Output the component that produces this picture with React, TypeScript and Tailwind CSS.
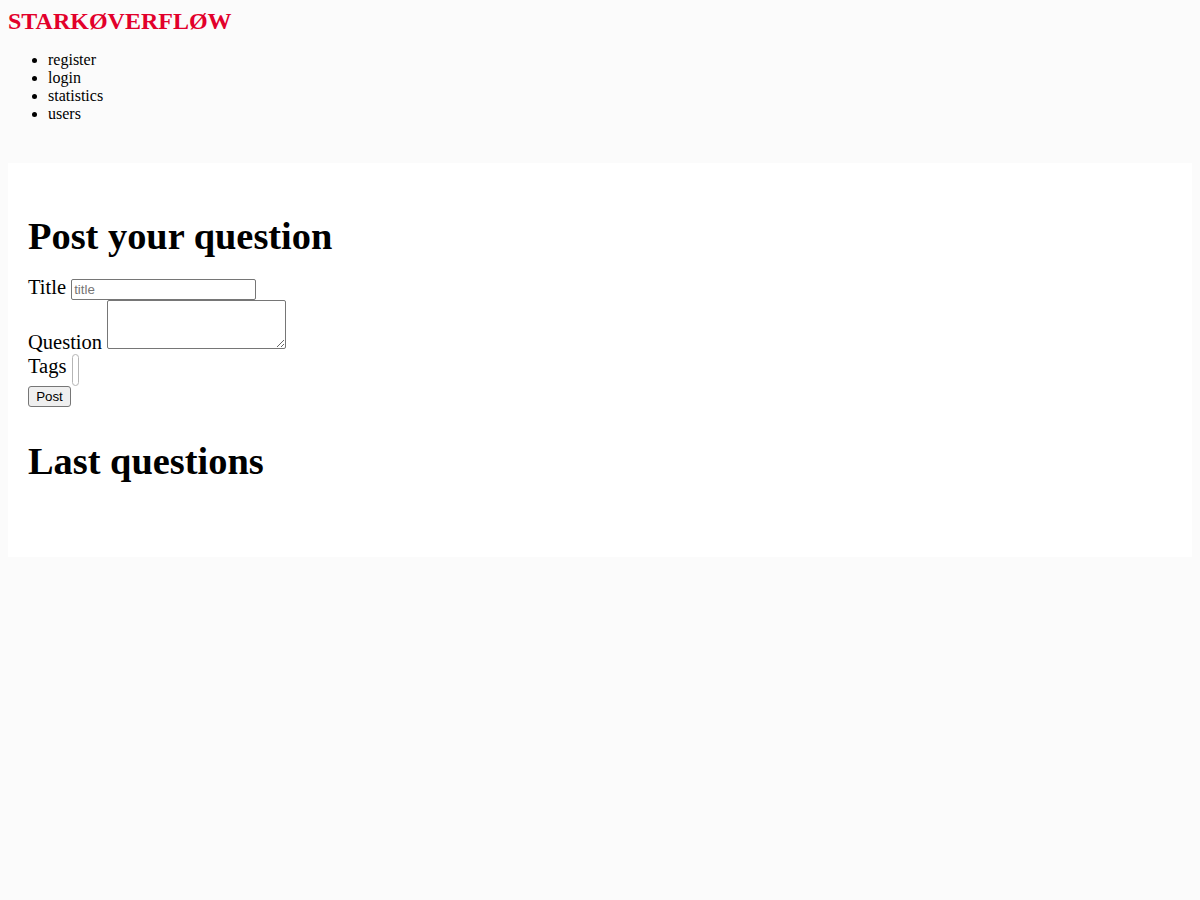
import { useState } from 'react';

const navLinks = ['register', 'login', 'statistics', 'users'];

const Header = () => (
  <header>
    <div className="text-[24px] font-bold leading-[27px] text-[#e2002b]">STARKØVERFLØW</div>
    <ul className="list-disc pl-10 my-4 text-[16px] leading-[18px]">
      {navLinks.map((link) => (
        <li key={link}>{link}</li>
      ))}
    </ul>
  </header>
);

const AskForm = () => {
  const [title, setTitle] = useState('');
  const [question, setQuestion] = useState('');

  return (
    <form className="text-[20.5px] leading-[23px]" onSubmit={(e) => e.preventDefault()}>
      <div>
        <label>Title</label>{' '}
        <input
          value={title}
          onChange={(e) => setTitle(e.target.value)}
          placeholder="title"
          className="w-[185px] h-[21px] border border-[#767676] rounded-[2px] px-[2px] py-[1px] bg-white font-['Liberation_Sans',Arial,sans-serif] text-[13.33px] leading-[normal] placeholder:text-[#757575] align-baseline"
        />
      </div>
      <div>
        <label>Question</label>{' '}
        <textarea
          value={question}
          onChange={(e) => setQuestion(e.target.value)}
          className="inline-block w-[179px] h-[49px] border border-[#767676] rounded-[2px] p-[2px] bg-white font-['Liberation_Mono',monospace] text-[13.33px] align-baseline"
        />
      </div>
      <div className="h-[32px]">
        <label className="relative top-[1px]">Tags</label>{' '}
        <span className="inline-block w-[7px] h-[32px] border border-[#b5b5b5] rounded-[4px] bg-white align-[-14px]" />
      </div>
      <button
        type="submit"
        className="block w-[43px] h-[21px] border border-[#767676] rounded-[3px] bg-[#efefef] font-['Liberation_Sans',Arial,sans-serif] text-[13.33px] leading-[normal] text-black"
      >
        Post
      </button>
    </form>
  );
};

export default function App() {
  return (
    <div className="min-h-screen bg-[#fbfbfb] p-2 font-['Liberation_Serif','Times_New_Roman',serif] text-black">
      <Header />
      <main className="mt-[40px] bg-white px-5 pt-[50px] pb-[73px]">
        <section>
          <h1 className="text-[38.4px] font-bold leading-[46px] mb-[17px]">Post your question</h1>
          <AskForm />
        </section>
        <section className="mt-[31px]">
          <h1 className="text-[38.4px] font-bold leading-[46px]">Last questions</h1>
        </section>
      </main>
    </div>
  );
}
